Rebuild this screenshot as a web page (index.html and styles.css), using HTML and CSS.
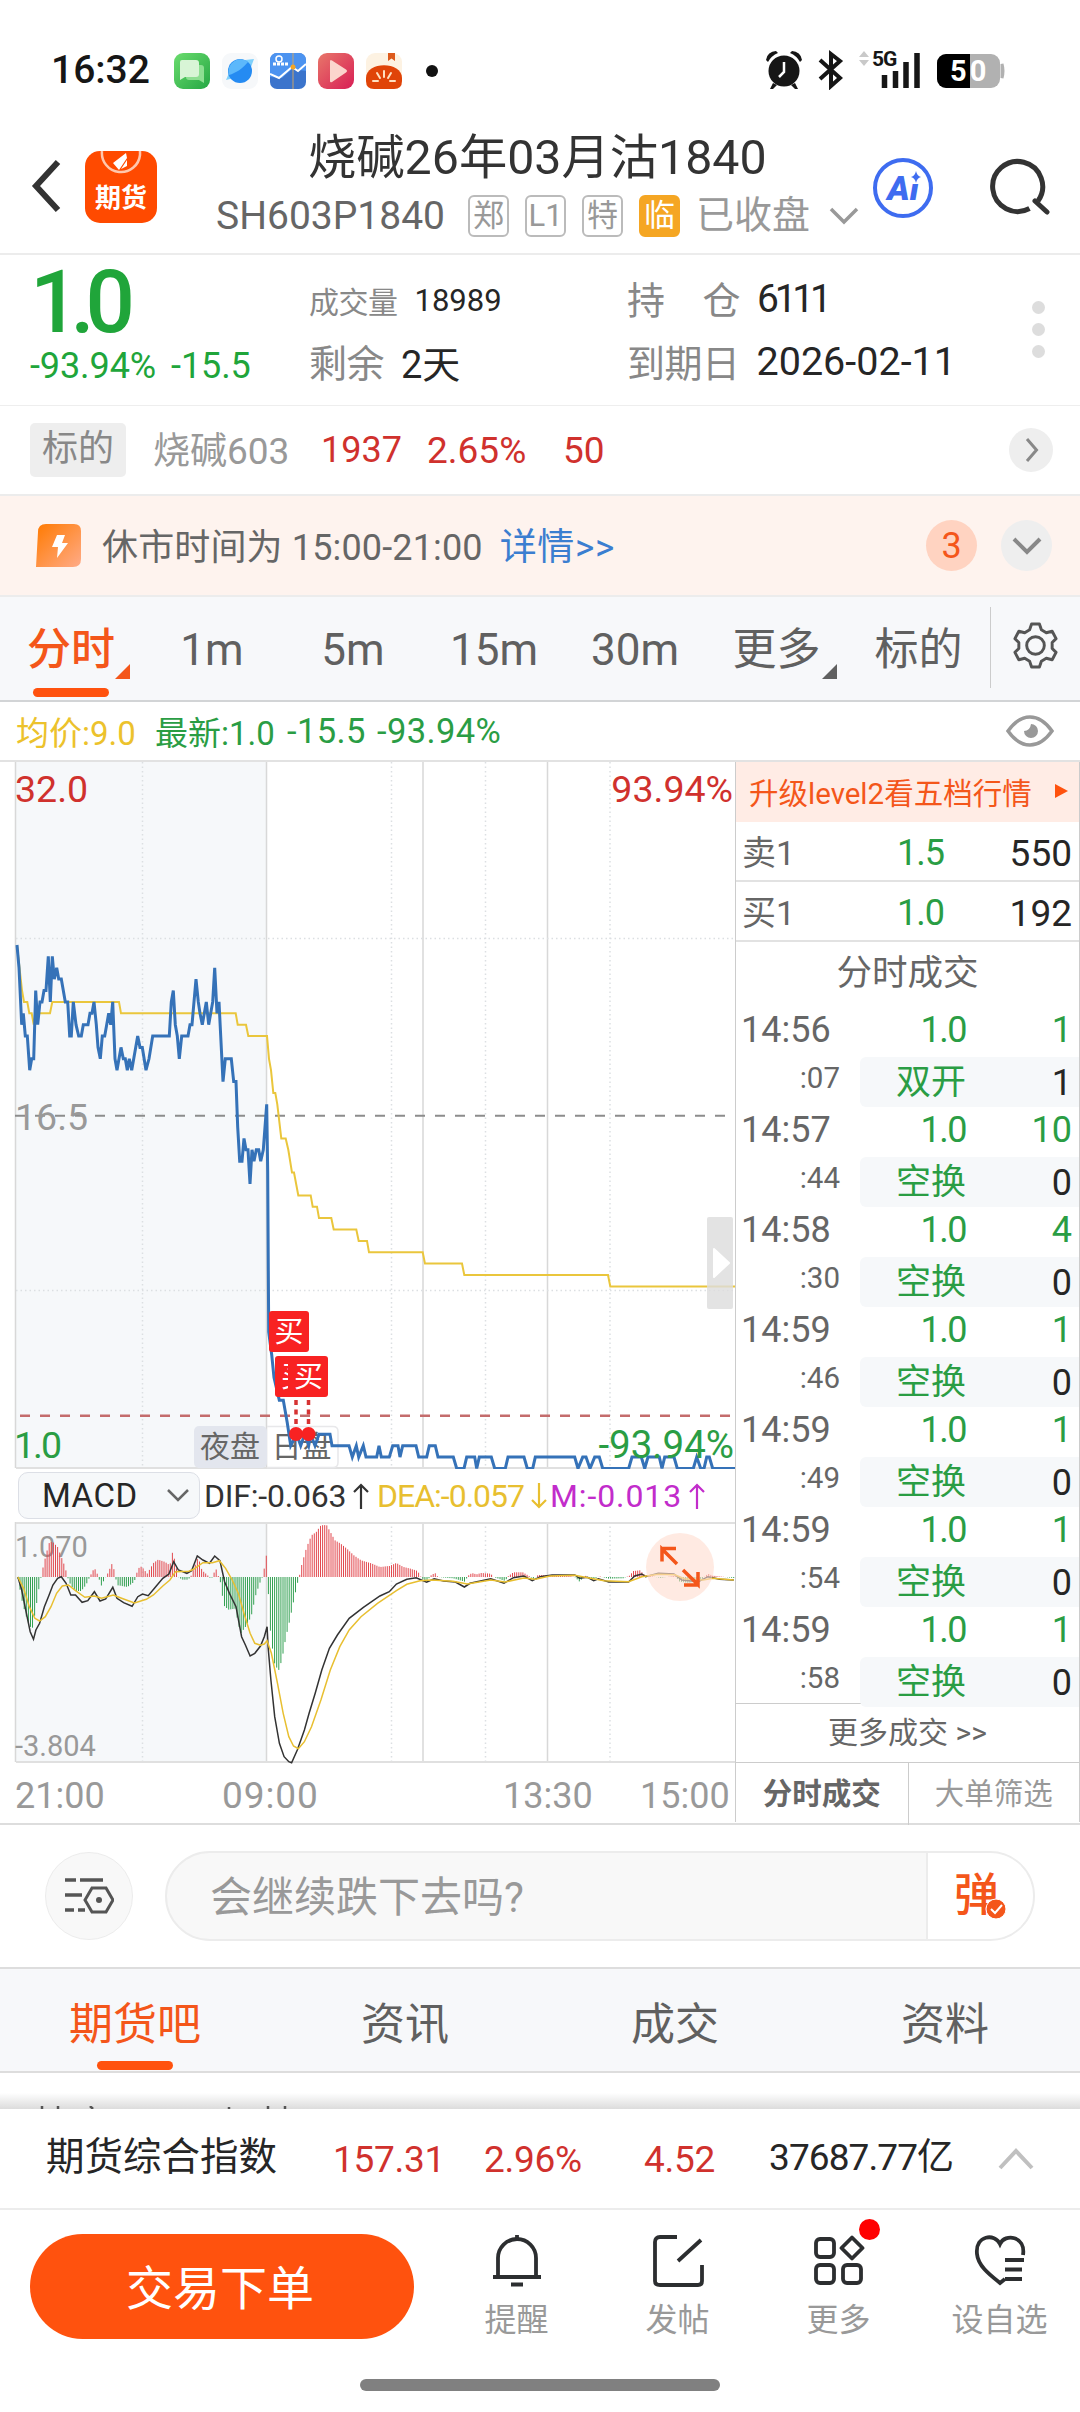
FILE: index.html
```html
<!DOCTYPE html>
<html lang="zh-CN">
<head>
  <meta charset="UTF-8" />
  <meta name="viewport" content="width=device-width, initial-scale=1.0"/>
  <title>烧碱26年03月沽1840</title>
  <link rel="stylesheet" href="styles.css">
</head>
<body>

  <div class="status">
    <span class="clock">16:32</span>
    <div class="apps">
      <svg width="36" height="36" viewBox="0 0 36 36"><defs><linearGradient id="ga" x1="0" y1="0" x2="1" y2="1"><stop offset="0" stop-color="#6bdc6e"/><stop offset="1" stop-color="#25a744"/></linearGradient></defs><rect width="36" height="36" rx="9" fill="url(#ga)"/><path d="M12 12h15a3 3 0 0 1 3 3v15l-5-3H15a3 3 0 0 1-3-3z" fill="#8ddf92"/><path d="M8 7h14a3 3 0 0 1 3 3v11a3 3 0 0 1-3 3H11l-5 3V9a2 2 0 0 1 2-2z" fill="#d8f5d6"/></svg>
      <svg width="36" height="36" viewBox="0 0 36 36"><rect width="36" height="36" rx="9" fill="#f6f8fa"/><path d="M4 27l8-2-5-5z" fill="#7fd0fb"/><path d="M32 6l-9 1 6 7z" fill="#7fd0fb"/><circle cx="18" cy="18" r="12" fill="#258bf2"/><path d="M7 22a12 12 0 0 1 19-13C20 16 14 20 7 22z" fill="#5cb8fb"/></svg>
      <svg width="36" height="36" viewBox="0 0 36 36"><rect width="36" height="36" rx="7" fill="#3b74cc"/><path d="M0 24L12 25 22 16 36 18V7a7 7 0 0 0-7-7H7a7 7 0 0 0-7 7z" fill="#4c93f0"/><circle cx="9" cy="6" r="3" fill="none" stroke="#fff" stroke-width="1.5"/><path d="M3 11h15" stroke="#fff" stroke-width="3" stroke-dasharray="3 1"/><path d="M23 0v36" stroke="#c9a36a" stroke-width="1"/><path d="M0 21L9 25 22 14l6 4 8-7" fill="none" stroke="#fff" stroke-width="2"/><circle cx="23" cy="14" r="2.5" fill="#f5a623"/></svg>
      <svg width="36" height="36" viewBox="0 0 36 36"><defs><linearGradient id="gb" x1="0" y1="0" x2="1" y2="1"><stop offset="0" stop-color="#e8776a"/><stop offset="1" stop-color="#d81e55"/></linearGradient></defs><rect width="36" height="36" rx="9" fill="url(#gb)"/><path d="M12 8.500Q12 6 14 7.500L28 16.500Q30 18 28 19.500L14 29Q12 30 12 28z" fill="#fbd5cd"/></svg>
      <svg width="36" height="36" viewBox="0 0 36 36"><rect width="36" height="36" rx="9" fill="#fdf2e2"/><path d="M22 0h7v8l-3.500-2.500L22 8z" fill="#dd5a1c"/><path d="M0 25C0 8 36 8 36 25v3q0 8-8 8H8q-8 0-8-8z" fill="#e04408"/><path d="M18 18v6M11 20l3 5M25 20l-3 5M7 28h5M24 28h5" stroke="#ffe0c0" stroke-width="2" stroke-linecap="round"/></svg>
    </div>
    <span class="more-dot"></span>
    <svg class="sys" width="240" height="42" viewBox="0 0 240 42">
      <g fill="#161616"><circle cx="18" cy="23" r="15.500"/><path d="M0 12A10 10 0 0 1 10 3l2 2A20 20 0 0 0 2 14zM36 12A10 10 0 0 0 26 3l-2 2a20 20 0 0 1 10 9z"/><path d="M7 35l-3 6h3l4-4zM29 35l3 6h-3l-4-4z"/></g>
      <path d="M18 14v10l-5 5" fill="none" stroke="#fff" stroke-width="2.500"/>
      <path d="M54 12l20 18-9 8V6l9 7-20 18" fill="none" stroke="#161616" stroke-width="4"/>
      <path d="M93 9l5-6 5 6zM93 12l5 6 5-6z" fill="#c9c9c9"/>
      <text x="106" y="18" class="net">5G</text>
      <path d="M118.500 27v13M129.500 23v17M140 14v26M151 5v35" stroke="#161616" stroke-width="5.500"/>
      <rect x="171" y="6" width="63" height="34" rx="9" fill="#b1b1b1"/><path d="M236 16q2 7 0 14z" stroke="#b1b1b1" stroke-width="3"/>
      <path d="M204 6h-24a9 9 0 0 0-9 9v16a9 9 0 0 0 9 9h24z" fill="#000"/>
      <text x="184" y="33" class="bat">50</text>
    </svg>
  </div>

  <header class="head">
    <svg class="back" width="30" height="54" viewBox="0 0 30 54"><path d="M27 3L5 27l22 24" fill="none" stroke="#333" stroke-width="6"/></svg>
    <div class="logo">
      <svg width="42" height="26" viewBox="0 0 42 26"><path d="M2 0a19 19 0 0 0 38 4V0" fill="none" stroke="#ffc7ad" stroke-width="2.500"/><path d="M13 12L26 2l1 5-8 12zM21 18l6-9v6z" fill="#fff"/></svg>
      <b>期货</b>
    </div>
    <div class="title">
      <h1>烧碱26年03月沽1840</h1>
      <div class="sub">
        <span class="code">SH603P1840</span>
        <i class="tag">郑</i><i class="tag">L1</i><i class="tag">特</i><i class="tag hot">临</i>
        <span class="state">已收盘</span>
        <svg width="30" height="18" viewBox="0 0 30 18"><path d="M2 2l13 13L28 2" fill="none" stroke="#999" stroke-width="3.500"/></svg>
      </div>
    </div>
    <div class="ai"><span>Ai</span><svg width="12" height="14" viewBox="0 0 12 14"><path d="M6 1q1 5 5 6-4 1-5 6-1-5-5-6 4-1 5-6z" fill="#3e6cf0"/></svg></div>
    <svg class="search" width="60" height="60" viewBox="0 0 60 60"><path d="M39.500 50.500A25 25 0 1 1 48 43" fill="none" stroke="#333" stroke-width="5"/><path d="M45 43l12 11" stroke="#333" stroke-width="5" stroke-linecap="round"/></svg>
  </header>

  <section class="quote">
    <div class="price">
      <strong>1.0</strong>
      <div class="chg"><span>-93.94%</span><span>-15.5</span></div>
    </div>
    <dl class="stats">
      <div class="vol"><dt>成交量</dt><dd>18989</dd></div>
      <div><dt>持<s></s>仓</dt><dd class="tight">6111</dd></div>
      <div><dt>剩余</dt><dd>2天</dd></div>
      <div><dt>到期日</dt><dd class="date">2026-02-11</dd></div>
    </dl>
    <div class="kebab"><i></i><i></i><i></i></div>
  </section>

  <section class="under">
    <span class="pill">标的</span>
    <span class="name">烧碱603</span>
    <span class="u1">1937</span><span class="u2">2.65%</span><span class="u3">50</span>
    <svg class="go" width="44" height="44" viewBox="0 0 44 44"><circle cx="22" cy="22" r="22" fill="#eee"/><path d="M18 11l9.500 11L18 33" fill="none" stroke="#888" stroke-width="3"/></svg>
  </section>

  <section class="notice">
    <svg width="46" height="43" viewBox="0 0 46 43"><defs><linearGradient id="gc" x1="0" y1="0" x2="1" y2="1"><stop offset="0" stop-color="#ff7a00"/><stop offset="1" stop-color="#ffab88"/></linearGradient></defs><path d="M10 0h28q7 0 7 7v28q0 8-8 8H0L2 8q0-8 8-8z" fill="url(#gc)"/><path d="M21 11h8l-3 8h6L21 34l1-11h-6z" fill="#fff"/></svg>
    <p>休市时间为 15:00-21:00</p>
    <a href="#">详情&gt;&gt;</a>
    <span class="count">3</span>
    <span class="fold"><svg width="30" height="18" viewBox="0 0 30 18"><path d="M2 2l13 13L28 2" fill="none" stroke="#888" stroke-width="4"/></svg></span>
  </section>

  <nav class="periods">
    <a class="on tri">分时</a><a>1m</a><a>5m</a><a>15m</a><a>30m</a><a class="tri">更多</a><a>标的</a>
    <svg class="gear" width="48" height="50" viewBox="0 0 48 50"><path d="M20 3h8l2 6 5 3 6-1.500 4 7.500-4 4v6l4 4-4 7.500-6-1.500-5 3-2 6h-8l-2-6-5-3-6 1.500L3 32l4-4v-6l-4-4 4-7.500 6 1.500 5-3z" fill="none" stroke="#555" stroke-width="3" stroke-linejoin="round"/><circle cx="24" cy="25" r="9" fill="none" stroke="#555" stroke-width="3"/></svg>
  </nav>

  <div class="legend">
    <span class="avg">均价:9.0</span><span class="g1">最新:1.0</span><span class="g2">-15.5</span><span class="g3">-93.94%</span>
    <svg width="48" height="32" viewBox="0 0 48 32"><path d="M2 16Q12 2 24 2t22 14Q36 30 24 30T2 16z" fill="none" stroke="#999" stroke-width="3.500"/><path d="M25 9a7 7 0 1 1-7 7q6 0 7-7z" fill="#999"/></svg>
  </div>

  <main class="board">
    <div class="charts">
      <svg class="kline" width="735" height="707" viewBox="0 0 735 707">
        <rect x="15" width="251" height="706" fill="#f6f8fa"/>
        <g class="grid"><path d="M15.500 0v706M266.500 0v706M423 0v706M547.500 0v706"/><path class="dot" d="M142.500 0v706M391.500 0v706M485.500 0v706M610 0v706"/><path class="dot" d="M16 176.500H735M16 528.500H735"/><path class="base" d="M16 706H735"/></g>
        <path d="M15 353.700H735" stroke="#8c8c8c" stroke-width="2" stroke-dasharray="10 10"/>
        <path d="M20 653.700H735" stroke="#c46c6c" stroke-width="2.500" stroke-dasharray="10 10"/>
        <rect x="194" y="664" width="73" height="42" rx="5" fill="#e3e6ee"/>
        <path d="M267 664.500h66q5 0 5 5v31q0 5-5 5h-66" fill="none" stroke="#e8e8ea" stroke-width="1.500"/>
        <text class="sess" x="200" y="695">夜盘</text><text class="sess" x="271.500" y="695">日盘</text>
        <text class="lab up" x="15" y="39.500">32.0</text>
        <text class="lab up" x="733" y="39.500" text-anchor="end">93.94%</text>
        <text class="lab mid" x="15" y="367.500">16.5</text>
        <text class="lab dn last" x="14" y="696">1.0</text>
        <polyline id="avgLine" class="l-avg"/>
        <polyline id="priceLine" class="l-price"/>
        <text class="lab dn pct" x="734" y="696" text-anchor="end">-93.94%</text>
        <path d="M296 638v28M308.500 638v28" stroke="#d63333" stroke-width="3.500" stroke-dasharray="5 4.500"/>
        <g fill="#f82222"><circle cx="296" cy="672" r="7"/><circle cx="308.500" cy="672" r="7"/><rect x="269" y="549" width="40" height="41" rx="3"/><rect x="275" y="594" width="53" height="41" rx="3"/></g>
        <g class="buy"><text x="274.500" y="580">买</text><text x="281" y="625" clip-path="url(#cut)">买</text><text x="294" y="625">买</text></g>
        <clipPath id="cut"><rect x="275" y="594" width="13" height="41"/></clipPath>
        <rect x="707" y="455" width="26" height="92" rx="2" fill="#ddd" fill-opacity=".82"/><path d="M714 487l15 14-15 14z" fill="#fff" stroke="#fff" stroke-width="2" stroke-linejoin="round"/>
      </svg>

      <div class="macd-row">
        <span class="sel">MACD<svg width="22" height="13" viewBox="0 0 22 13"><path d="M1 1l10 10L21 1" fill="none" stroke="#666" stroke-width="2.500"/></svg></span>
        <span class="dif">DIF:-0.063<svg width="18" height="26" viewBox="0 0 18 26"><path d="M9 26V2M2 9l7-7 7 7"/></svg></span>
        <span class="dea">DEA:-0.057<svg width="18" height="26" viewBox="0 0 18 26"><path d="M9 0v24M2 17l7 7 7-7"/></svg></span>
        <span class="mm">M:-0.013<svg width="18" height="26" viewBox="0 0 18 26"><path d="M9 26V2M2 9l7-7 7 7"/></svg></span>
      </div>

      <svg class="macd" width="735" height="242" viewBox="0 0 735 242">
        <rect x="15" width="251" height="240" fill="#f6f8fa"/>
        <g class="grid"><path d="M15.500 0v240M266.500 0v240M423 0v240M547.500 0v240"/><path class="dot" d="M142.500 0v240M391.500 0v240M485.500 0v240M610 0v240"/><path class="base" d="M16 1H735M16 240H735"/></g>
        <text class="small" x="15" y="34.500">1.070</text><text class="small" x="15" y="233.500">-3.804</text>
        <path id="histUp" stroke="#e2494f"/><path id="histDn" stroke="#33a052"/>
        <polyline id="difLine" class="l-dif"/><polyline id="deaLine" class="l-dea"/>
        <circle cx="680" cy="45" r="34" fill="#ffdccf" fill-opacity=".6"/>
        <path d="M677 42L662 27v12.500M661 26.500h15M683 48l15 14.500V50M699 63h-15" fill="none" stroke="#f4561a" stroke-width="3.500"/>
      </svg>
      <div class="axis"><span>21:00</span><span>09:00</span><span>13:30</span><span>15:00</span></div>
    </div>

    <aside class="book">
      <div class="upgrade">升级level2看五档行情<i></i></div>
      <div class="lvl"><span>卖1</span><b>1.5</b><em>550</em></div>
      <div class="lvl"><span>买1</span><b>1.0</b><em>192</em></div>
      <h3>分时成交</h3>
      <div id="ticks"></div>
      <div class="all">更多成交 &gt;&gt;</div>
      <div class="switch"><b>分时成交</b><span>大单筛选</span></div>
    </aside>
  </main>

  <section class="chat">
    <span class="set"><svg width="50" height="40" viewBox="0 0 50 40"><path d="M1 4h11M16 4h23M1 19h17M1 34h9M14 34h7" stroke="#555" stroke-width="3.500"/><path d="M28 12h14l7 12-7 12H28l-7-12z" fill="none" stroke="#555" stroke-width="3"/><circle cx="35" cy="24" r="3" fill="#555"/></svg></span>
    <div class="field"><span>会继续跌下去吗?</span><div class="dan">弹<svg width="22" height="22" viewBox="0 0 22 22"><circle cx="11" cy="11" r="10" fill="#f4561a" stroke="#fff"/><path d="M6 11l4 4 7-8" fill="none" stroke="#fff" stroke-width="2"/></svg></div></div>
  </section>

  <nav class="tabs"><a class="on">期货吧</a><a>资讯</a><a>成交</a><a>资料</a></nav>
  <div class="feed"><svg width="300" height="3" viewBox="0 0 300 3"><path d="M42 0v3M58 0v3M90 0l3 3M229 1v2M268 0v3M285 0v3" stroke="#555" stroke-width="2.500"/></svg></div>

  <section class="index">
    <span>期货综合指数</span><span class="up">157.31</span><span class="up">2.96%</span><span class="up">4.52</span><span class="total">37687.77亿</span>
    <svg width="36" height="22" viewBox="0 0 36 22"><path d="M2 20L18 3l16 17" fill="none" stroke="#c0c0c0" stroke-width="4"/></svg>
  </section>

  <footer class="actions">
    <button>交易下单</button>
    <div class="act"><svg width="52" height="54" viewBox="0 0 52 54"><path d="M26 1v5M7 43V24a19 19 0 0 1 38 0v19M2 43h48M20 50.500h12" fill="none" stroke="#2c2e30" stroke-width="3.800"/></svg>提醒</div>
    <div class="act"><svg width="52" height="54" viewBox="0 0 52 54"><path d="M25 3H8Q3 3 3 8v39q0 4 5 4h38q4 0 4-4V31M49 6L26 27" fill="none" stroke="#2c2e30" stroke-width="3.800"/></svg>发帖</div>
    <div class="act"><svg width="52" height="54" viewBox="0 0 52 54"><g fill="none" stroke="#2c2e30" stroke-width="3.800"><rect x="3" y="5" width="18" height="18" rx="4"/><rect x="3" y="31" width="18" height="18" rx="4"/><rect x="30" y="31" width="18" height="18" rx="4"/><path d="M39 3.500L49.500 14 39 24.500 28.500 14z" stroke-linejoin="round"/></g></svg><i class="red"></i>更多</div>
    <div class="act"><svg width="52" height="54" viewBox="0 0 52 54"><path d="M49 21C52 2 31-1 26 10 21-1 1 1 3 20c1 12 13 21 23 29l5-4M31 26h19M31 35.500h17M31 45h17" fill="none" stroke="#2c2e30" stroke-width="3.800"/></svg>设自选</div>
  </footer>
  <div class="home"></div>

  <script src="chart.js"></script>
</body>
</html>
```
FILE: styles.css
```css
* {
  box-sizing: border-box;
}
body {
  margin: 0;
  width: 1080px;
  height: 2412px;
  overflow: hidden;
  background: #fff;
  color: #262626;
  font-family: Roboto, "Noto Sans CJK SC", sans-serif;
}
h1, h3, p, dl, dd {
  margin: 0;
  font-weight: 400;
}
i, em {
  font-style: normal;
}
svg {
  flex: none;
  display: block;
}

/* status bar */
.status {
  display: flex;
  align-items: center;
  height: 110px;
  padding: 32px 74px 0 51px;
}
.clock {
  width: 123px;
  font-size: 39px;
  line-height: 42px;
  padding-bottom: 2px;
  font-weight: 500;
  color: #161616;
}
.apps {
  display: flex;
  gap: 12px;
}
.more-dot {
  width: 12px;
  height: 12px;
  border-radius: 50%;
  background: #111;
  margin-left: 24px;
}
.sys {
  margin: -4px 0 0 auto;
}
.net {
  font-size: 21px;
  font-weight: 700;
  letter-spacing: -1px;
  fill: #161616;
}
.bat {
  font-size: 29px;
  font-weight: 700;
  letter-spacing: 3px;
  fill: #fff;
}

/* header */
.head {
  display: flex;
  height: 145px;
  padding-left: 31px;
  border-bottom: 2px solid #ececec;
}
.back {
  margin-top: 49px;
}
.logo {
  width: 72px;
  height: 72px;
  margin: 41px 0 0 24px;
  border-radius: 15px;
  background: #ff4a00;
  color: #fff;
  display: flex;
  flex-direction: column;
  align-items: center;
}
.logo b {
  font-size: 26px;
  line-height: 34px;
  margin-top: 4px;
}
.title {
  width: 647px;
  margin-left: 57px;
}
.title h1 {
  margin: 20px 0 0 94px;
  font-size: 48.300px;
  line-height: 56px;
  color: #333;
  white-space: nowrap;
}
.sub {
  display: flex;
  align-items: center;
  height: 60px;
}
.code {
  width: 254px;
  padding-left: 2px;
  font-size: 39px;
  color: #666;
}
.tag {
  width: 41px;
  height: 42px;
  margin-right: 16px;
  border: 2px solid #bbb;
  border-radius: 6px;
  font-size: 31px;
  line-height: 37px;
  text-align: center;
  color: #999;
}
.tag.hot {
  border-color: #f5a623;
  background: #f5a623;
  color: #fff;
}
.state {
  width: 133px;
  font-size: 38px;
  line-height: 44px;
  padding-bottom: 3px;
  color: #999;
}
.ai {
  position: relative;
  width: 60px;
  height: 60px;
  margin-top: 48px;
  margin-left: 12px;
  border: 4.500px solid #3e6cf0;
  border-radius: 50%;
  text-align: center;
  font-size: 34px;
  line-height: 52px;
  font-weight: 900;
  font-style: italic;
  color: #3e6cf0;
}
.ai svg {
  position: absolute;
  right: 7px;
  top: 8px;
  background: #fff;
}
.search {
  margin: 48px 0 0 57px;
}

/* quote */
.quote {
  display: flex;
  height: 151px;
  border-bottom: 1px solid #eee;
}
.price {
  width: 309px;
  padding: 0 0 0 30px;
  color: #20a53a;
}
.price strong {
  display: block;
  margin-top: 1px;
  font-size: 87px;
  line-height: 92px;
  font-weight: 500;
  letter-spacing: -9px;
}
.chg {
  display: flex;
  gap: 15px;
  font-size: 36px;
  line-height: 36px;
  letter-spacing: -.1px;
}
.stats {
  width: 700px;
  display: grid;
  grid-template-columns: 318px 1fr;
  grid-template-rows: 63px 63px;
  padding-top: 12px;
  font-size: 38px;
}
.stats div {
  display: flex;
  align-items: center;
  gap: 17px;
  white-space: nowrap;
}
.stats dt {
  margin-top: -2px;
  color: #888;
  letter-spacing: -.5px;
}
.stats s {
  display: inline-block;
  width: 38px;
}
.stats .vol dt {
  font-size: 30px;
}
.stats .vol {
  font-size: 31px;
  padding-top: 4px;
}
.stats .date {
  font-size: 39.500px;
}
.stats .tight {
  font-size: 39px;
  letter-spacing: -4.300px;
}
.kebab {
  width: 58px;
  padding-top: 46px;
  display: flex;
  flex-direction: column;
  align-items: center;
  gap: 9px;
}
.kebab i {
  width: 13px;
  height: 13px;
  border-radius: 50%;
  background: #ddd;
}

/* underlying */
.under {
  display: flex;
  align-items: center;
  height: 90px;
  padding: 0 27px 0 30px;
  border-bottom: 2px solid #ececec;
  font-size: 37px;
  color: #d0312d;
}
.pill {
  width: 96px;
  height: 54px;
  border-radius: 5px;
  background: #eee;
  color: #888;
  font-size: 36px;
  line-height: 53px;
  text-align: center;
}
.under .name {
  width: 168px;
  margin-left: 27px;
  padding-bottom: 4px;
  color: #999;
}
.u1 {
  width: 106px;
  font-size: 36px;
}
.u2 {
  width: 136px;
}
.go {
  margin-left: auto;
}

/* notice */
.notice {
  display: flex;
  align-items: center;
  height: 101px;
  padding: 0 28px 0 36px;
  background: #fef3ee;
  border-bottom: 2px solid #ececec;
  font-size: 36px;
}
.notice p {
  margin-left: 20px;
  padding-bottom: 3px;
  letter-spacing: .15px;
  color: #666;
}
.notice a {
  margin-left: 17px;
  padding-bottom: 3px;
  font-size: 37px;
  letter-spacing: .6px;
  color: #3b7ed0;
  text-decoration: none;
}
.count, .fold {
  display: flex;
  align-items: center;
  justify-content: center;
  width: 51px;
  height: 51px;
  border-radius: 50%;
  background: #ffd3c1;
  color: #f4561a;
}
.count {
  margin-left: auto;
}
.fold {
  margin-left: 24px;
  background: #eee;
}

/* period tabs */
.periods {
  display: grid;
  grid-template-columns: 142px 140px 142px 140px 142px 143px 141px 90px;
  height: 105px;
  background: #f7f8fa;
  border-bottom: 2px solid #d2d4d6;
  font-size: 44px;
  line-height: 103px;
  padding-top: 2px;
  color: #606060;
  text-align: center;
}
.periods a {
  position: relative;
  height: 101px;
}
.periods a:nth-child(n+6) {
  padding-right: 2px;
}
.periods .on {
  color: #f4561a;
  font-weight: 500;
}
.on::before {
  content: "";
  position: absolute;
  left: 50%;
  bottom: 3px;
  width: 76px;
  height: 9px;
  margin-left: -38px;
  border-radius: 5px;
  background: #ff520e;
}
.tri::after {
  content: "";
  position: absolute;
  right: 12px;
  bottom: 21px;
  border-left: 15px solid transparent;
  border-bottom: 15px solid currentColor;
}
.gear {
  margin-top: 8px;
  width: 90px;
  height: 81px;
  padding: 14px 20px 18px;
  border-left: 1px solid #ccc;
}

.legend {
  display: flex;
  align-items: center;
  height: 60px;
  padding: 0 26px 0 16px;
  border-bottom: 2px solid #e2e2e2;
  font-size: 33px;
  color: #2a9d44;
}
.legend .avg {
  width: 139px;
  color: #ecc22c;
}
.g1 {
  width: 132px;
}
.g2 {
  width: 90px;
}
.g2, .g3 {
  font-size: 34.500px;
  letter-spacing: .4px;
}
.legend svg {
  margin-left: auto;
}

/* chart + order book */
.board {
  display: flex;
  height: 1063px;
  border-bottom: 2px solid #ddd;
}
.charts {
  width: 735px;
}
.grid path {
  stroke: #d8d8d8;
  stroke-width: 1.500;
}
.grid .dot {
  stroke: #dcdfe2;
  stroke-dasharray: 1.500 3;
}
.grid .base {
  stroke: #e0e0e0;
  stroke-width: 2;
}
.lab {
  font-size: 37.500px;
}
.lab.up {
  fill: #d0312d;
}
.lab.dn {
  fill: #2a9d44;
}
.lab.last {
  letter-spacing: -2px;
}
.lab.pct {
  font-size: 38.500px;
}
.lab.mid, .small {
  fill: #999;
}
.small {
  font-size: 29px;
}
.sess {
  font-size: 30px;
  fill: #666;
}
.buy text {
  font-size: 29px;
  fill: #fff;
}
polyline {
  fill: none;
}
.l-avg {
  stroke: #eac63c;
  stroke-width: 2;
}
.l-price {
  stroke: #3572b8;
  stroke-width: 3;
}
.l-dif {
  stroke: #333;
  stroke-width: 1.500;
}
.l-dea {
  stroke: #e8bf30;
  stroke-width: 1.500;
}
.macd-row {
  display: flex;
  align-items: center;
  height: 53px;
  padding-left: 18px;
  font-size: 32px;
}
.macd-row span {
  display: flex;
  align-items: center;
}
.macd-row .sel {
  width: 182px;
  height: 47px;
  padding: 0 10px 0 23px;
  margin-right: 4px;
  justify-content: space-between;
  background: #f6f8fa;
  border: 1.500px solid #dcdfe6;
  border-radius: 10px;
  font-size: 33px;
  letter-spacing: .5px;
}
.dif, .dea, .mm {
  width: 173px;
  gap: 6px;
  color: #333;
  letter-spacing: -.2px;
}
.dif svg, .dea svg, .mm svg {
  fill: none;
  stroke: currentColor;
  stroke-width: 2.200;
}
.macd-row .dea {
  color: #e8bf30;
  letter-spacing: -1px;
}
.macd-row .mm {
  color: #c22ccb;
  letter-spacing: .9px;
}
.axis {
  display: grid;
  grid-template-columns: 207px 281px 137px 1fr;
  padding-left: 15px;
  font-size: 36px;
  line-height: 64px;
  color: #999;
}
.axis span:nth-child(2) {
  font-size: 37px;
  letter-spacing: .9px;
}
.book {
  width: 345px;
  height: 1060px;
  border-left: 1.500px solid #ccc;
  border-right: 1.500px solid #ccc;
  font-size: 36px;
}
.upgrade {
  display: flex;
  align-items: center;
  justify-content: space-between;
  height: 60px;
  padding: 0 11px 2px 13px;
  background: #ffece5;
  color: #f4561a;
  font-size: 29.500px;
  white-space: nowrap;
}
.upgrade i {
  border: 7px solid transparent;
  border-left: 13px solid #ff520e;
  border-right: 0;
}
.lvl {
  display: grid;
  grid-template-columns: 108px 94px 1fr;
  height: 60px;
  padding: 0 7px 0 6px;
  border-bottom: 2px solid #e2e2e2;
  line-height: 63px;
  color: #666;
}
.lvl span {
  font-size: 34px;
}
.lvl b, .lvl em {
  font-weight: 400;
  text-align: right;
  color: #2a9d44;
}
.lvl b {
  letter-spacing: -1px;
}
.lvl em {
  font-size: 37px;
  color: #262626;
}
.book h3 {
  height: 61px;
  font-size: 35.500px;
  line-height: 62px;
  text-align: center;
  color: #666;
}
.tick {
  display: grid;
  grid-template-columns: 124px 1fr;
  height: 100px;
  line-height: 54px;
  color: #666;
}
.tick time {
  padding-left: 5px;
}
.tick small {
  padding-right: 20px;
  font-size: 29.500px;
  line-height: 42px;
  text-align: right;
}
.tick div {
  display: grid;
  grid-template-columns: 106px 1fr;
  height: 50px;
  padding-right: 7px;
  text-align: right;
  color: #2a9d44;
}
.tick .price1 {
  letter-spacing: -1.500px;
}
.tick .box {
  border-radius: 6px 0 0 6px;
  background: #f6f8fa;
  font-size: 35px;
  line-height: 52px;
}
.box em {
  font-size: 36px;
  color: #262626;
}
.all {
  height: 60px;
  border: solid #ccc;
  border-width: 1.500px 0;
  line-height: 58px;
  font-size: 30px;
  text-align: center;
  color: #666;
}
.switch {
  display: grid;
  grid-template-columns: 1fr 1fr;
  height: 58px;
  line-height: 62px;
  font-size: 29.500px;
  text-align: center;
  color: #666;
}
.switch span {
  border-left: 1px solid #ccc;
  color: #999;
}

/* comment bar */
.chat {
  display: flex;
  align-items: center;
  height: 144px;
  padding: 0 45px;
  border-bottom: 2px solid #ddd;
}
.set {
  display: flex;
  align-items: center;
  justify-content: center;
  width: 88px;
  height: 88px;
  border: 1.500px solid #ececec;
  border-radius: 50%;
  background: #f8f8f8;
}
.field {
  display: flex;
  width: 870px;
  height: 90px;
  margin-left: 32px;
  border: 2px solid #ececec;
  border-radius: 45px;
  background: #f8f8f8;
  overflow: hidden;
  font-size: 42px;
  line-height: 90px;
  color: #999;
}
.field > span {
  flex: 1;
  padding-left: 43px;
}
.dan {
  position: relative;
  width: 107px;
  padding-left: 26px;
  background: #fff;
  border-left: 2px solid #ececec;
  font-size: 45px;
  line-height: 85px;
  font-weight: 500;
  color: #f4561a;
}
.dan svg {
  position: absolute;
  left: 57px;
  top: 45px;
}

.tabs {
  display: grid;
  grid-template-columns: repeat(4, 1fr);
  height: 104px;
  background: #f7f8fa;
  border-bottom: 2px solid #ddd;
  font-size: 44px;
  line-height: 112px;
  text-align: center;
  color: #606060;
}
.tabs a {
  position: relative;
  height: 102px;
}
.tabs .on {
  color: #f4561a;
}
.tabs .on::before {
  bottom: 1px;
}
.feed {
  display: flex;
  align-items: flex-end;
  height: 36px;
  background: linear-gradient(#fff 55%, #dcdcdc);
}

/* index strip */
.index {
  display: grid;
  grid-template-columns: 287px 151px 160px 125px 229px 1fr;
  align-items: center;
  height: 101px;
  padding-left: 46px;
  border-bottom: 2px solid #ececec;
  font-size: 37px;
  line-height: 48px;
  white-space: nowrap;
}
.index span:first-child {
  font-size: 38.500px;
  padding-bottom: 3px;
}
.index .up {
  color: #d0312d;
  padding-top: 2px;
  letter-spacing: -.3px;
}
.index .total {
  letter-spacing: -.9px;
  padding-bottom: 1px;
}

/* bottom actions */
.actions {
  display: flex;
  height: 169px;
  padding: 24px 0 0 30px;
}
.actions button {
  width: 384px;
  height: 105px;
  margin-right: 22px;
  padding: 0 4px 4px 0;
  border: 0;
  border-radius: 53px;
  background: #ff520e;
  color: #fff;
  font: inherit;
  font-size: 47px;
}
.act {
  position: relative;
  display: flex;
  flex-direction: column;
  align-items: center;
  width: 161px;
  font-size: 32px;
  line-height: 65px;
  color: #999;
}
.act .red {
  position: absolute;
  left: 101px;
  top: -15px;
  width: 21px;
  height: 21px;
  border-radius: 50%;
  background: #f00;
}
.home {
  width: 360px;
  height: 12px;
  margin: 0 auto;
  border-radius: 6px;
  background: #808080;
}
```
FILE: chart.js
```js
// price series: x in thirds of a pixel, y is the price
const price = [51,24,57,23,65,20.5,70,21,76,20,82,20,89,18.5,95,19,101,19,107,22,113,20.5,120,21.5,126,21.5,132,22,138,22,145,23.5,151,21.5,157,23.5,163,22.5,170,23,176,22.5,184,22.5,190,22,196,21.5,203,21.5,209,20,214,20,220,21.5,228,20.5,236,20,244,20,250,20.5,264,20.5,270,21,276,21,282,21.5,289,20.5,294,19.5,301,19,307,20,314,20,320,20.5,326,21,332,20.5,338,21.5,345,19,351,18.5,357,19,363,19.5,370,19,376,19,382,18.5,388,19,395,18.5,407,19.5,413,20,420,19.5,427,19.5,438,18.5,447,19,458,20,508,20,514,21.5,520,22,526,20.5,532,20,538,19,545,20,564,20,570,20.5,576,20.5,588,22.5,595,21.5,600,21,607,20.5,619,21.5,626,20.5,638,21.5,644,23,651,21,657,21.5,669,18,676,19,694,19,701,18,708,18,713,16,719,14.5,726,14.5,732,15.5,738,15,744,15,750,13.5,756,15,762,14.5,769,15,776,15,782,14.5,790,15,800,17,803,14,806,7,815,6,822,5,838,4,850,4,862,3,872,2,890,2.5,902,2,914,2.5,926,2,932,2.5,945,2,957,2.5,990,2.5,996,2,1047,2,1057,1.5,1069,2,1076,1.5,1090,2,1098,1.5,1130,1.5,1137,2,1144,1.5,1168,1.5,1178,2,1194,2,1200,1.5,1208,2,1248,2,1256,1.5,1280,1.5,1288,2,1306,2,1314,1.5,1360,1.5,1370,1,1392,1,1400,1.5,1424,1.5,1430,1,1438,1.5,1474,1.5,1484,1,1516,1,1524,1.5,1572,1.5,1582,1,1598,1,1606,1.5,1724,1.5,1734,1,1748,1.5,1758,1.5,1770,1,1784,1.5,1798,1.5,1808,1,1886,1,1896,1.5,1924,1.5,1934,1,1944,1.5,1978,1.5,1986,1,1994,1.5,2022,1.5,2032,1,2080,1,2090,1.5,2102,1,2112,1,2120,1.5,2128,1.5,2138,1,2205,1];
const avg = [51,24,66,22,72,21.5,82,21.5,88,21,95,21,101,20.5,107,21,150,21,157,21.5,357,21.5,363,21,707,21,713,20.5,738,20.5,745,20,801,20,807,19,813,18.5,820,17.5,826,17.5,832,17,844,15.5,857,15.5,865,15,876,14,882,14,895,13,932,13,938,12.5,951,12.5,957,12,994,12,1001,11.5,1069,11.5,1076,11,1101,11,1107,10.5,1268,10.5,1275,10,1386,10,1393,9.5,1824,9.5,1831,9,2205,9];

// MACD pane: x and y on a 1568 x 990 canvas
const hist = [38,-5,48,-80,58,-130,68,-160,76,-95,84,-20,87,0,92,35,98,70,105,105,112,105,122,90,130,60,138,30,143,0,150,-25,160,-42,172,-42,182,-25,190,0,200,28,206,10,209,0,214,-28,222,-5,228,10,239,45,244,0,250,-25,270,-30,284,-15,288,0,292,25,300,32,312,10,325,42,335,52,350,45,360,35,366,78,372,40,378,0,386,-8,398,-8,404,0,412,30,420,60,428,20,438,8,446,-4,452,0,456,32,462,5,468,-20,474,-85,484,-98,498,-95,510,-170,520,-150,532,-120,542,-55,550,-20,556,0,562,40,566,83,568,0,569,-80,574,-180,582,-260,590,-282,597,-250,606,-180,614,-130,624,-60,630,-20,634,0,640,40,650,90,660,125,670,135,680,155,692,156,700,135,710,110,722,100,735,85,750,65,765,50,785,42,805,30,825,33,840,42,855,30,870,25,885,18,892,0,900,-12,908,-6,914,6,922,12,928,0,960,-4,985,-14,992,4,1000,12,1010,8,1020,12,1040,10,1046,0,1070,-12,1078,4,1088,14,1108,14,1120,4,1130,-6,1140,6,1160,6,1200,5,1218,0,1228,-14,1240,4,1255,-8,1270,2,1290,-5,1320,-4,1334,4,1342,18,1356,20,1366,6,1400,-3,1430,4,1440,-14,1460,-18,1485,-10,1500,10,1510,4,1555,-3];
const dif = [38,231,46,270,56,340,64,395,71,418,76,390,84,370,94,320,104,285,112,255,122,235,130,230,140,250,150,285,160,285,174,307,186,302,200,275,212,303,224,297,239,262,248,295,262,308,280,319,292,290,302,282,314,287,330,260,345,235,358,222,368,185,378,210,396,220,406,212,418,168,430,180,444,190,455,168,466,182,476,245,486,280,500,320,512,410,520,435,530,468,540,460,552,438,560,410,566,380,568,440,574,540,582,650,592,730,602,770,612,785,618,788,630,750,645,690,655,640,668,580,682,510,698,445,715,405,740,355,770,322,805,288,825,275,840,252,862,238,882,233,904,247,920,236,940,243,965,246,984,261,996,250,1040,236,1068,250,1088,233,1110,228,1128,242,1145,230,1170,225,1218,225,1228,235,1245,232,1258,242,1268,236,1290,246,1332,246,1345,228,1360,222,1368,230,1395,220,1428,222,1445,240,1480,245,1500,230,1525,238,1555,240];
const dea = [38,231,50,265,62,320,74,355,84,363,96,350,108,320,120,280,132,258,145,255,160,272,180,292,200,288,215,295,240,285,262,297,285,309,310,298,325,285,345,258,360,240,372,215,400,214,410,208,430,188,450,188,465,182,478,205,492,240,505,280,518,345,530,400,540,430,552,436,560,432,566,422,575,460,588,550,600,640,612,710,622,738,632,746,645,725,660,680,680,600,700,510,720,440,740,390,765,350,800,310,840,272,862,253,890,242,915,240,960,244,990,252,1040,240,1070,246,1110,234,1135,238,1165,228,1218,226,1240,232,1280,242,1332,245,1360,230,1395,223,1430,224,1450,236,1490,240,1510,235,1555,240];

function draw(id, data, fx, fy) {
  const pts = [];
  for (let i = 0; i < data.length; i += 2) {
    pts.push(fx(data[i]).toFixed(1) + ',' + fy(data[i + 1]).toFixed(1));
  }
  document.getElementById(id).setAttribute('points', pts.join(' '));
}

const px = x => x / 3;
const py = p => 353.7 + (16.5 - p) * 22.76;
const mx = x => x / 2.119;
const my = v => v / 3 - 22;
draw('priceLine', price, px, py);
draw('avgLine', avg, px, py);
draw('difLine', dif, mx, my);
draw('deaLine', dea, mx, my);

// one bar per minute
let up = '', dn = '', k = 0;
for (let x = 38; x < 1555; x += 4.422) {
  while (hist[k + 2] < x) k += 2;
  const t = (x - hist[k]) / (hist[k + 2] - hist[k]);
  const h = (hist[k + 1] + (hist[k + 3] - hist[k + 1]) * t) / 3;
  const seg = `M${mx(x).toFixed(1)} 55v${(-h).toFixed(1)}`;
  if (h > 0) up += seg; else dn += seg;
}
document.getElementById('histUp').setAttribute('d', up);
document.getElementById('histDn').setAttribute('d', dn);

const ticks = [
  ['14:56', '07', 1, '双开', 1],
  ['14:57', '44', 10, '空换', 0],
  ['14:58', '30', 4, '空换', 0],
  ['14:59', '46', 1, '空换', 0],
  ['14:59', '49', 1, '空换', 0],
  ['14:59', '54', 1, '空换', 0],
  ['14:59', '58', 1, '空换', 0]
];
document.getElementById('ticks').innerHTML = ticks.map(t => `
  <div class="tick">
    <time>${t[0]}</time><div><span class="price1">1.0</span><span>${t[2]}</span></div>
    <small>:${t[1]}</small><div class="box"><span>${t[3]}</span><em>${t[4]}</em></div>
  </div>`).join('');
```
